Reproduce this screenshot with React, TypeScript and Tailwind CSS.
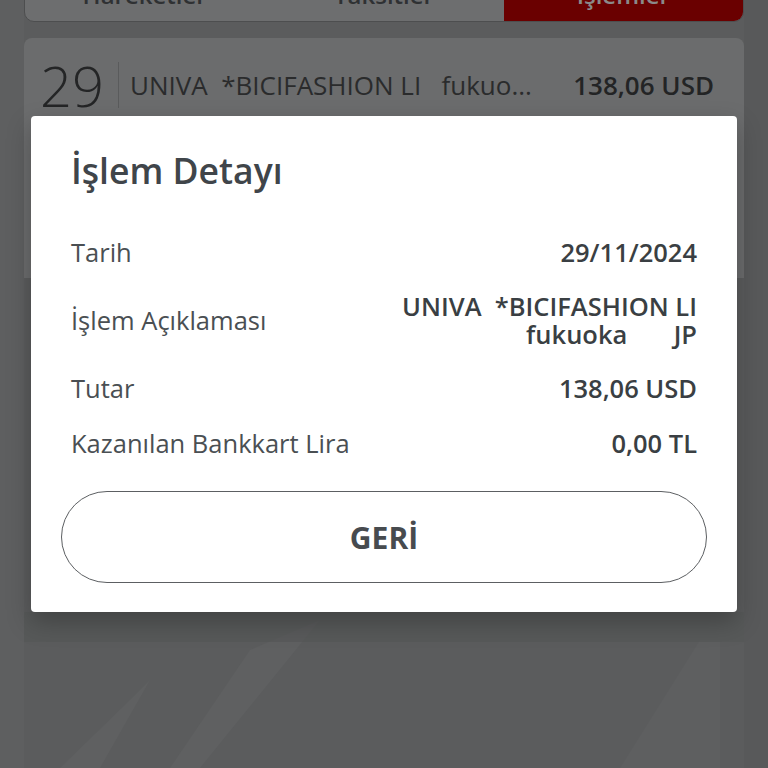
import React from "react";

const font = { fontFamily: '"Open Sans", "Liberation Sans", sans-serif' };

const rows = [
  { label: "Tarih", value: ["29/11/2024"] },
  { label: "İşlem Açıklaması", value: ["UNIVA  *BICIFASHION LI", "fukuoka       JP"] },
  { label: "Tutar", value: ["138,06 USD"] },
  { label: "Kazanılan Bankkart Lira", value: ["0,00 TL"] },
];

function Background() {
  return (
    <svg className="absolute inset-0 h-full w-full" viewBox="0 0 768 768" preserveAspectRatio="none">
      <rect width="768" height="768" fill="#5b5c5d" />
      <polygon points="0,0 24,0 24,768 0,768" fill="#5e5f60" />
      <polygon points="744,0 768,0 768,768 744,768" fill="#58595a" />
      <polygon points="130,700 150,680 100,768 60,768" fill="#5f6061" />
      <polygon points="250,650 320,620 200,768 170,768" fill="#5f6061" />
      <polygon points="700,640 720,640 720,768 620,768" fill="#5e5f60" />
      <rect x="24" y="612" width="720" height="30" fill="#555657" opacity="0.6" />
    </svg>
  );
}

export default function App() {
  return (
    <div className="relative h-[768px] w-full overflow-hidden" style={font}>
      <Background />

      <div className="relative px-[24px]">
        {/* tabs, mostly scrolled off */}
        <div className="-mt-[38px] flex h-[60px] overflow-hidden rounded-b-[10px] border border-[#4d4e4f] bg-[#6d6e6f]">
          <div className="flex flex-1 items-end justify-center text-[24px] font-semibold leading-none text-[#2f3133]">
            <span className="mb-[14px]">Hareketler</span>
          </div>
          <div className="flex flex-1 items-end justify-center text-[24px] font-semibold leading-none text-[#2f3133]">
            <span className="mb-[14px]">Taksitler</span>
          </div>
          <div className="flex flex-1 items-end justify-center bg-[#6a0000] text-[24px] font-semibold leading-none text-[#8a8a8a]">
            <span className="mb-[14px]">İşlemler</span>
          </div>
        </div>

        {/* transaction card under the dim */}
        <div className="mt-[16px] h-[240px] rounded-t-[8px] bg-[#6b6c6d]">
          <div className="flex items-center pl-[16px] pr-[30px] pt-[19px]">
            <div className="w-[78px] text-[56px] font-light leading-none text-[#242526]">29</div>
            <div className="h-[46px] w-px bg-[#5a5b5c]" />
            <div className="ml-[11px] flex-1 whitespace-pre text-[26px] text-[#2a2b2c]">
              {"UNIVA  *BICIFASHION LI   fukuo..."}
            </div>
            <div className="text-[26px] font-semibold text-[#232425]">138,06 USD</div>
          </div>
        </div>
      </div>

      {/* dialog */}
      <div className="absolute left-[31px] top-[116px] w-[706px] rounded-[4px] bg-white shadow-[0_10px_24px_rgba(0,0,0,0.25)]">
        <div className="px-[40px] pt-[30px] pb-[29px]">
          <h1 className="text-[35.5px] font-semibold leading-[48px] text-[#40454a]">İşlem Detayı</h1>

          <div className="mt-[43px] flex flex-col gap-[25px]">
            {rows.map((r) => (
              <div key={r.label} className="flex items-center justify-between">
                <div className="text-[25.5px] leading-[30px] text-[#4a4f53]">{r.label}</div>
                <div className="flex flex-col items-end">
                  {r.value.map((v) => (
                    <div key={v} className="whitespace-pre text-[25.5px] font-semibold leading-[28px] text-[#3a3f43]">
                      {v}
                    </div>
                  ))}
                </div>
              </div>
            ))}
          </div>

          <button className="-mx-[10px] mt-[33px] flex h-[92px] w-[646px] items-center justify-center rounded-full border border-[#5c5f62] bg-white text-[30px] font-bold text-[#474b4f]">
            GERİ
          </button>
        </div>
      </div>
    </div>
  );
}
